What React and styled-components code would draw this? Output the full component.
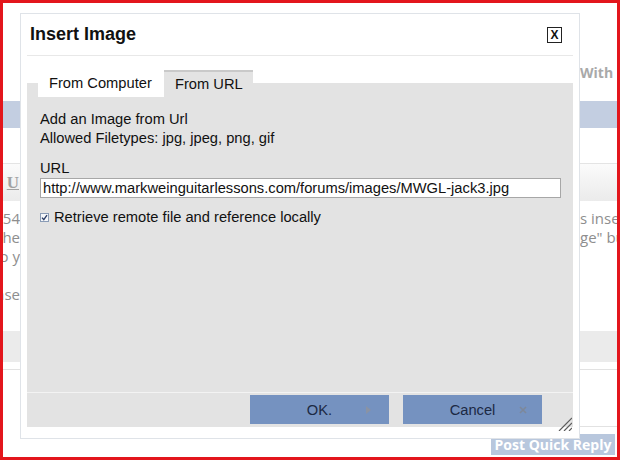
import React from "react";
import styled, { createGlobalStyle } from "styled-components";

const Global = createGlobalStyle`
  html, body { margin: 0; padding: 0; background: #fff; }
  * { box-sizing: border-box; }
`;

/* ---------- the forum page behind the dialog ---------- */

const Frame = styled.div`
  position: relative;
  width: 620px;
  height: 460px;
  border: 3px solid #e3161c;
  background: #fff;
  overflow: hidden;
  display: flex;
  flex-direction: column;
  font-family: "Open Sans", "DejaVu Sans", sans-serif;
`;

const Band = styled.div`
  flex: none;
  height: ${(p) => p.$h}px;
  display: flex;
  justify-content: space-between;
  align-items: ${(p) => p.$align || "stretch"};
  background: ${(p) => p.$bg || "#fff"};
  border-top: ${(p) => (p.$line ? "1px solid #e4e4e4" : "none")};
  padding-top: ${(p) => p.$pt || 0}px;
`;

const LeftGutter = styled.div`
  width: 17px;
  overflow: hidden;
  display: flex;
  flex-direction: column;
  align-items: flex-end;
  white-space: nowrap;
`;

const RightGutter = styled.div`
  width: 37px;
  overflow: hidden;
  white-space: nowrap;
  padding-top: ${(p) => p.$pt || 0}px;
`;

const MutedLink = styled.span`
  display: block;
  font-size: 14px;
  line-height: 20px;
  font-weight: 700;
  color: #a9a9a9;
`;

const UnderlineTool = styled.span`
  font-family: "Liberation Serif", serif;
  font-weight: 700;
  font-size: 17px;
  color: #a2a2a2;
  text-decoration: underline;
  padding-right: 1px;
  line-height: 20px;
`;

const TextLine = styled.span`
  display: block;
  font-size: 15px;
  line-height: 19px;
  height: 19px;
  color: #8e8e8e;
`;

const BottomArea = styled.div`
  flex: 1;
  border-top: 1px solid #e2e2e2;
  display: flex;
  flex-direction: column;
  align-items: flex-end;
`;

const RightRule = styled.div`
  width: 37px;
  margin-top: 56px;
  border-top: 1px solid #e2e2e2;
`;

const QuickReply = styled.div`
  margin-top: 7px;
  margin-right: 2px;
  width: 124px;
  height: 21px;
  background: #b8c7dd;
  color: #fff;
  font-weight: 700;
  font-size: 14px;
  line-height: 21px;
  text-align: center;
  white-space: nowrap;
`;

/* ---------- the dialog ---------- */

const Dialog = styled.div`
  position: absolute;
  left: 17px;
  top: 10px;
  width: 560px;
  height: 426px;
  background: #fff;
  border: 1px solid #dfe3e8;
  padding: 0 6px 11px;
  display: flex;
  flex-direction: column;
  font-family: "Liberation Sans", Arial, sans-serif;
  color: #111;
`;

const Header = styled.div`
  height: 42px;
  display: flex;
  align-items: center;
  justify-content: space-between;
  padding: 0 11px 0 3px;
  border-bottom: 1px solid #e8e8e8;
`;

const Title = styled.h1`
  margin: 0;
  font-size: 18px;
  line-height: 21px;
  font-weight: 700;
  color: #111;
`;

const CloseBox = styled.button`
  width: 15px;
  height: 16px;
  padding: 0;
  border: 1px solid #222;
  background: #fff;
  font-family: "Liberation Sans", Arial, sans-serif;
  font-size: 12px;
  font-weight: 700;
  line-height: 14px;
  color: #111;
  cursor: pointer;
`;

const TabRow = styled.div`
  margin-top: 14px;
  height: 27px;
  display: flex;
  padding-left: 11px;
  background: linear-gradient(to bottom, #fff 0 13px, #e3e3e3 13px);
`;

const Tab = styled.div`
  height: 27px;
  padding: 0 ${(p) => (p.$active ? 11 : 11)}px;
  width: ${(p) => p.$w}px;
  font-size: 14.7px;
  line-height: 27px;
  color: #111;
  background: ${(p) => (p.$active ? "#e3e3e3" : "#fff")};
  border-top: ${(p) => (p.$active ? "2px solid #c9c9c9" : "none")};
  line-height: ${(p) => (p.$active ? 25 : 27)}px;
  white-space: nowrap;
`;

const Panel = styled.div`
  flex: 1;
  background: #e3e3e3;
  padding: 13px 12px 0 13px;
  font-size: 14.7px;
  line-height: 19px;
  color: #111;
`;

const Para = styled.div`
  margin-top: ${(p) => p.$mt || 0}px;
`;

const UrlField = styled.input`
  display: block;
  width: 100%;
  height: 20px;
  margin: 0;
  padding: 0 2px;
  border: 1px solid #a7a7a7;
  background: #fff;
  font-family: "Liberation Sans", Arial, sans-serif;
  font-size: 14.7px;
  color: #111;
  outline: none;
`;

const CheckRow = styled.label`
  display: flex;
  align-items: center;
  gap: 5px;
  margin-top: 10px;
`;

const Tick = styled.span`
  width: 9px;
  height: 9px;
  border: 1px solid #8a9cb6;
  background: #f5f7fa;
  display: flex;
  align-items: center;
  justify-content: center;
`;

const Footer = styled.div`
  height: 35px;
  background: #e3e3e3;
  border-top: 1px solid #f3f3f3;
  display: flex;
  justify-content: flex-end;
  align-items: flex-start;
  gap: 14px;
  padding: 2px 31px 0 0;
`;

const ActionButton = styled.button`
  position: relative;
  width: 139px;
  height: 29px;
  border: none;
  padding: 0;
  background: #7592c0;
  color: #1c2944;
  font-family: "Liberation Sans", Arial, sans-serif;
  font-size: 14.7px;
  cursor: pointer;
`;

const ButtonGlyph = styled.span`
  position: absolute;
  right: ${(p) => p.$r}px;
  top: 50%;
  transform: translateY(-50%);
  display: flex;
`;

const Grip = styled.svg`
  position: absolute;
  right: 7px;
  bottom: 7px;
`;

export default function App() {
  return (
    <>
      <Global />
      <Frame>
        <Band $h={98}>
          <LeftGutter />
          <RightGutter $pt={60}>
            <MutedLink>With Quote</MutedLink>
          </RightGutter>
        </Band>
        <Band $h={27} $bg="#c3cee1" />
        <Band $h={35} />
        <Band
          $h={38}
          $line
          $align="center"
          $bg="linear-gradient(to bottom, #fbfbfb, #ebebeb)"
        >
          <LeftGutter>
            <UnderlineTool>U</UnderlineTool>
          </LeftGutter>
          <RightGutter />
        </Band>
        <Band $h={130} $pt={8}>
          <LeftGutter>
            <TextLine>1254</TextLine>
            <TextLine>the</TextLine>
            <TextLine>to y</TextLine>
            <TextLine />
            <TextLine>ase</TextLine>
          </LeftGutter>
          <RightGutter>
            <TextLine>s inserted</TextLine>
            <TextLine>ge" button</TextLine>
          </RightGutter>
        </Band>
        <Band $h={31} $bg="#ebebeb" />
        <Band $h={7} />
        <BottomArea>
          <RightRule />
          <QuickReply>Post Quick Reply</QuickReply>
        </BottomArea>

        <Dialog>
          <Header>
            <Title>Insert Image</Title>
            <CloseBox>X</CloseBox>
          </Header>
          <TabRow>
            <Tab $w={126}>From Computer</Tab>
            <Tab $w={89} $active>
              From URL
            </Tab>
          </TabRow>
          <Panel>
            <Para>Add an Image from Url</Para>
            <Para>Allowed Filetypes: jpg, jpeg, png, gif</Para>
            <Para $mt={11}>URL</Para>
            <UrlField
              readOnly
              value="http://www.markweinguitarlessons.com/forums/images/MWGL-jack3.jpg"
            />
            <CheckRow>
              <Tick>
                <svg width="7" height="7" viewBox="0 0 7 7">
                  <path
                    d="M1 3.6 L2.8 5.6 L6 1.2"
                    fill="none"
                    stroke="#2b3d66"
                    strokeWidth="1.4"
                  />
                </svg>
              </Tick>
              Retrieve remote file and reference locally
            </CheckRow>
          </Panel>
          <Footer>
            <ActionButton>
              OK.
              <ButtonGlyph $r={18}>
                <svg width="5" height="8" viewBox="0 0 5 8">
                  <path d="M0 0 L5 4 L0 8 Z" fill="#8a93a4" />
                </svg>
              </ButtonGlyph>
            </ActionButton>
            <ActionButton>
              Cancel
              <ButtonGlyph $r={15}>
                <svg width="8" height="8" viewBox="0 0 8 8">
                  <path
                    d="M1 1 L7 7 M7 1 L1 7"
                    stroke="#7d889a"
                    strokeWidth="1.6"
                  />
                </svg>
              </ButtonGlyph>
            </ActionButton>
          </Footer>
          <Grip width="14" height="14" viewBox="0 0 14 14">
            <path
              d="M14 1 L1 14 M14 6 L6 14 M14 11 L11 14"
              stroke="#5c5c5c"
              strokeWidth="1.2"
            />
          </Grip>
        </Dialog>
      </Frame>
    </>
  );
}
